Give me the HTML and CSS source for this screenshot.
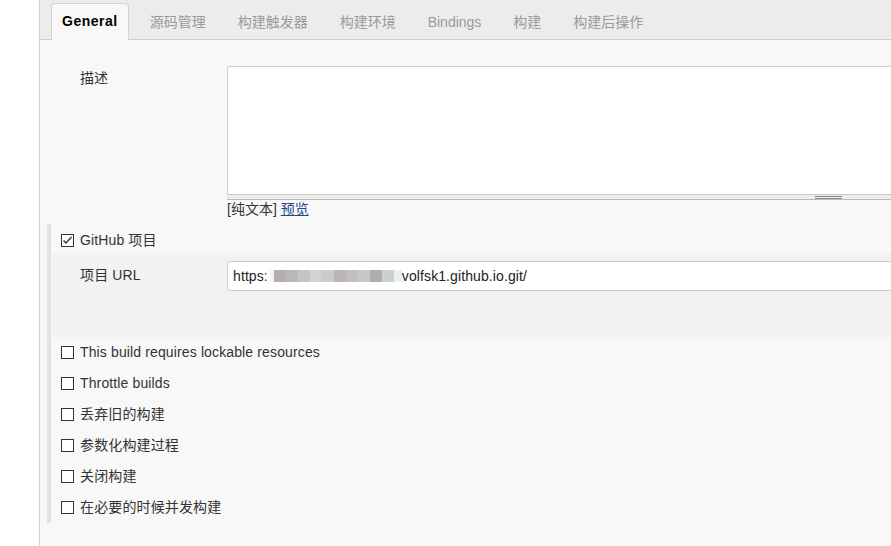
FILE: index.html
```html
<!DOCTYPE html>
<html lang="zh">
<head>
<meta charset="utf-8">
<title>General</title>
<link rel="stylesheet" href="styles.css">
</head>
<body>
<div class="page">
  <div class="gutter"></div>
  <div class="panel">
    <div class="tabs">
      <div class="tab active">General</div>
      <div class="tab">源码管理</div>
      <div class="tab">构建触发器</div>
      <div class="tab">构建环境</div>
      <div class="tab">Bindings</div>
      <div class="tab">构建</div>
      <div class="tab">构建后操作</div>
    </div>
    <div class="form">
      <div class="row desc-row">
        <div class="label">描述</div>
        <div class="field">
          <div class="textarea"></div>
          <div class="handle"><span class="grip"></span></div>
          <div class="hint">[纯文本] <a class="link" href="#">预览</a></div>
        </div>
      </div>
      <div class="section">
        <div class="check-row github">
          <span class="cb"><svg width="13" height="13" viewBox="0 0 13 13"><polyline points="2.5,6.5 5,9 10.5,3" fill="none" stroke="#333" stroke-width="1.3"/></svg></span>
          <span>GitHub 项目</span>
        </div>
        <div class="sub">
          <div class="label sub-label">项目 URL</div>
          <div class="input">https:<span class="blur"></span>volfsk1.github.io.git/</div>
        </div>
        <div class="check-row opt"><span class="cb"></span><span>This build requires lockable resources</span></div>
        <div class="check-row opt"><span class="cb"></span><span>Throttle builds</span></div>
        <div class="check-row opt"><span class="cb"></span><span>丢弃旧的构建</span></div>
        <div class="check-row opt"><span class="cb"></span><span>参数化构建过程</span></div>
        <div class="check-row opt"><span class="cb"></span><span>关闭构建</span></div>
        <div class="check-row opt"><span class="cb"></span><span>在必要的时候并发构建</span></div>
      </div>
    </div>
  </div>
</div>
</body>
</html>
```
FILE: styles.css
```css
html, body {
  margin: 0;
  padding: 0;
  overflow: hidden;
  background: #fff;
}
body {
  font-family: "Liberation Sans", Arial, "Noto Sans CJK SC", sans-serif;
  font-size: 14px;
  color: #333;
}
.page {
  display: flex;
  width: 891px;
  height: 546px;
  overflow: hidden;
}
.gutter {
  width: 39px;
  flex: none;
  background: #fff;
}
.panel {
  flex: 1;
  min-width: 0;
  border-left: 1px solid #d4d4d4;
  background: #f8f8f8;
  overflow: hidden;
}
.tabs {
  height: 39px;
  border-bottom: 1px solid #cccccc;
  background: #ececec;
  display: flex;
  align-items: flex-end;
  padding-left: 11px;
}
.tab {
  height: 35px;
  line-height: 35px;
  padding: 0 10px;
  margin-right: 10px;
  margin-bottom: -1px;
  border: 1px solid transparent;
  border-bottom: none;
  color: #9a9a9a;
  font-size: 14px;
  white-space: nowrap;
}
.tab.active {
  background: #f8f8f8;
  border-color: #d2d2d2;
  border-radius: 4px 4px 0 0;
  color: #000;
  font-weight: bold;
  letter-spacing: 0.5px;
  height: 36px;
}
.form {
  padding-top: 26px;
}
.row {
  display: flex;
  align-items: flex-start;
}
.desc-row {
  padding-left: 40px;
}
.label {
  width: 147px;
  flex: none;
  line-height: 17px;
  padding-top: 4px;
}
.field {
  width: 1203px;
  flex: none;
}
.textarea {
  height: 127px;
  border: 1px solid #cccccc;
  border-bottom: none;
  border-radius: 3px 3px 0 0;
  background: #fff;
}
.handle {
  height: 4px;
  border-top: 1px solid #c8c8c8;
  border-bottom: 1px solid #bbbbbb;
  background: #ececec;
  display: flex;
  justify-content: center;
}
.grip {
  width: 27px;
  height: 1px;
  margin-top: 1px;
  border-top: 1px solid #8a8a8a;
  border-bottom: 1px solid #8a8a8a;
}
.hint {
  margin-top: 1px;
  line-height: 17px;
  color: #333;
}
.link {
  color: #204a87;
  text-decoration: underline;
}
.section {
  margin-top: 6px;
  margin-left: 7px;
  border-left: 4px solid #e2e2e2;
}
.check-row {
  display: flex;
  align-items: center;
  padding-left: 10px;
  line-height: 17px;
  white-space: nowrap;
  letter-spacing: 0.13px;
}
.github {
  padding-top: 8px;
  padding-bottom: 4px;
  height: 17px;
}
.opt {
  height: 31px;
}
.cb {
  width: 13px;
  height: 13px;
  flex: none;
  box-sizing: border-box;
  border: 1px solid #333;
  background: #fff;
  margin-right: 6px;
  display: flex;
  align-items: center;
  justify-content: center;
}
.cb svg {
  display: block;
  margin: -1px;
}
.sub {
  display: flex;
  align-items: flex-start;
  background: #f2f2f2;
  height: 84px;
  padding-left: 29px;
}
.sub-label {
  margin-top: 10px;
  letter-spacing: 0.13px;
}
.input {
  margin-top: 8px;
  width: 1203px;
  flex: none;
  box-sizing: border-box;
  height: 30px;
  line-height: 28px;
  border: 1px solid #cccccc;
  border-radius: 3px;
  background: #fff;
  padding-left: 5px;
  color: #222;
  white-space: nowrap;
  letter-spacing: 0.1px;
}
.blur {
  display: inline-block;
  vertical-align: middle;
  width: 132px;
  height: 12px;
  margin-left: 2px;
  margin-top: -2px;
  background: linear-gradient(to right,
    #f4f2f2 0 4px,
    #b4aeae 4px 16px,
    #bcb8b8 16px 28px,
    #c4c4c4 28px 40px,
    #d2d2d2 40px 52px,
    #cbcbcb 52px 64px,
    #bab4b4 64px 76px,
    #c2bebe 76px 88px,
    #c8c8c8 88px 100px,
    #b3acac 100px 112px,
    #c9d1d2 112px 124px,
    #eef0f0 124px 132px);
  box-shadow: 0 0 4px 2px rgba(255, 255, 255, 0.9);
}
```
